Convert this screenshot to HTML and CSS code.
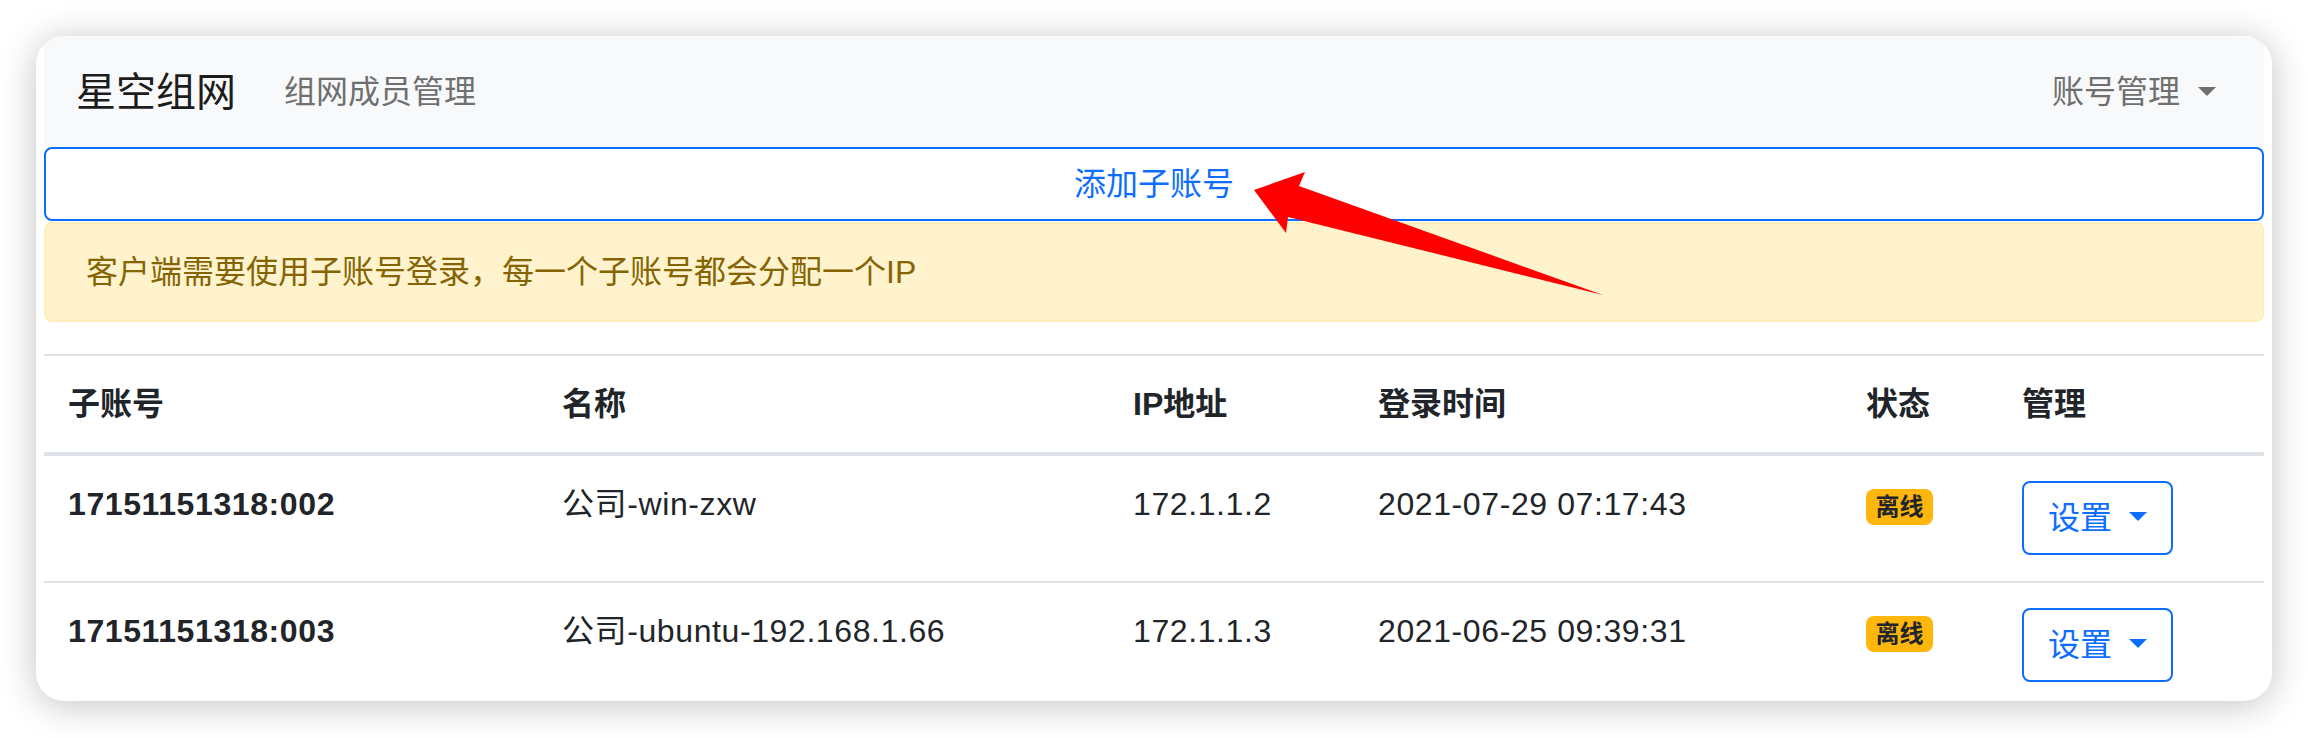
FILE: index.html
```html
<!DOCTYPE html>
<html lang="zh-CN">
<head>
<meta charset="utf-8">
<title>星空组网 - 组网成员管理</title>
<link rel="stylesheet" href="styles.css">
</head>
<body>
<div class="window">
  <nav class="navbar">
    <span class="brand">星空组网</span>
    <a class="nav-link">组网成员管理</a>
    <a class="nav-link nav-right">账号管理 <span class="caret"></span></a>
  </nav>
  <button class="btn-add">添加子账号</button>
  <div class="alert">客户端需要使用子账号登录，每一个子账号都会分配一个IP</div>
  <table class="table">
    <colgroup>
      <col class="c1"><col class="c2"><col class="c3"><col class="c4"><col class="c5"><col class="c6">
    </colgroup>
    <thead>
      <tr><th>子账号</th><th>名称</th><th>IP地址</th><th>登录时间</th><th>状态</th><th>管理</th></tr>
    </thead>
    <tbody>
      <tr>
        <th class="rowhead">17151151318:002</th>
        <td>公司-win-zxw</td>
        <td>172.1.1.2</td>
        <td>2021-07-29 07:17:43</td>
        <td><span class="badge">离线</span></td>
        <td><button class="btn-set">设置 <span class="caret"></span></button></td>
      </tr>
      <tr>
        <th class="rowhead">17151151318:003</th>
        <td>公司-ubuntu-192.168.1.66</td>
        <td>172.1.1.3</td>
        <td>2021-06-25 09:39:31</td>
        <td><span class="badge">离线</span></td>
        <td><button class="btn-set">设置 <span class="caret"></span></button></td>
      </tr>
    </tbody>
  </table>
</div>
<svg class="annotation" viewBox="0 0 2308 738" width="2308" height="738">
  <polygon points="1254,190 1305,172 1299,186 1603,295 1288,217 1286,233" fill="#ff0000"/>
</svg>
</body>
</html>
```

FILE: styles.css
```css
html, body {
  margin: 0;
  padding: 0;
  background: #ffffff;
}
body {
  position: relative;
  width: 2308px;
  height: 738px;
  overflow: hidden;
  font-family: "Liberation Sans", "Noto Sans CJK SC", sans-serif;
  font-size: 32px;
  line-height: 48px;
  color: #212529;
}
.window {
  margin: 36px;
  height: 665px;
  box-sizing: border-box;
  padding: 0 8px;
  background: #ffffff;
  border-radius: 28px;
  overflow: hidden;
  box-shadow: 0 4px 36px rgba(0, 0, 0, 0.24);
}
.navbar {
  height: 111px;
  box-sizing: border-box;
  display: flex;
  align-items: center;
  padding: 0 32px;
  background: #f8f9fa;
}
.brand {
  font-size: 40px;
  line-height: 60px;
  color: #1c1c1c;
  margin-right: 32px;
}
.nav-link {
  padding: 0 16px;
  color: #6f6f6f;
  display: inline-flex;
  align-items: center;
}
.nav-right {
  margin-left: auto;
}
.caret {
  display: inline-block;
  width: 0;
  height: 0;
  border-top: 9px solid currentColor;
  border-left: 9px solid transparent;
  border-right: 9px solid transparent;
  margin-left: 8px;
  vertical-align: 0.255em;
}
.nav-link .caret {
  margin-left: 18px;
}
.btn-add {
  display: block;
  width: 100%;
  height: 74px;
  box-sizing: border-box;
  margin: 0;
  padding: 11px 24px;
  border: 2px solid #0d6efd;
  border-radius: 8px;
  background: #ffffff;
  color: #0d6efd;
  font-family: inherit;
  font-size: 32px;
  line-height: 48px;
  text-align: center;
}
.alert {
  margin: 1px 0 32px;
  padding: 24px 40px;
  border: 2px solid #ffeeba;
  border-radius: 8px;
  background: #fff3cd;
  color: #856404;
}
.table {
  width: 100%;
  border-collapse: collapse;
  table-layout: fixed;
}
.c1 { width: 494px; }
.c2 { width: 571px; }
.c3 { width: 245px; }
.c4 { width: 488px; }
.c5 { width: 156px; }
.c6 { width: 266px; }
.table th,
.table td {
  text-align: left;
  vertical-align: top;
  padding: 24px 24px 26px;
  border-top: 2px solid #dee2e6;
  white-space: nowrap;
}
.table tbody th,
.table tbody td {
  letter-spacing: 0.6px;
}
.table thead th {
  padding: 24px;
  font-weight: 700;
  border-bottom: 4px solid #dee2e6;
}
.rowhead {
  font-weight: 700;
}
.badge {
  display: inline-block;
  padding: 6px 9.6px;
  font-size: 24px;
  font-weight: 700;
  line-height: 1;
  letter-spacing: 0;
  border-radius: 8px;
  background: #ffb60d;
  color: #212529;
}
.btn-set {
  display: inline-block;
  vertical-align: top;
  height: 74px;
  box-sizing: border-box;
  margin: 1px 0 0;
  padding: 11px 24px;
  border: 2px solid #0d6efd;
  border-radius: 8px;
  background: #ffffff;
  color: #0d6efd;
  font-family: inherit;
  font-size: 32px;
  line-height: 48px;
  letter-spacing: 0;
}
.annotation {
  position: absolute;
  left: 0;
  top: 0;
  pointer-events: none;
}
```
